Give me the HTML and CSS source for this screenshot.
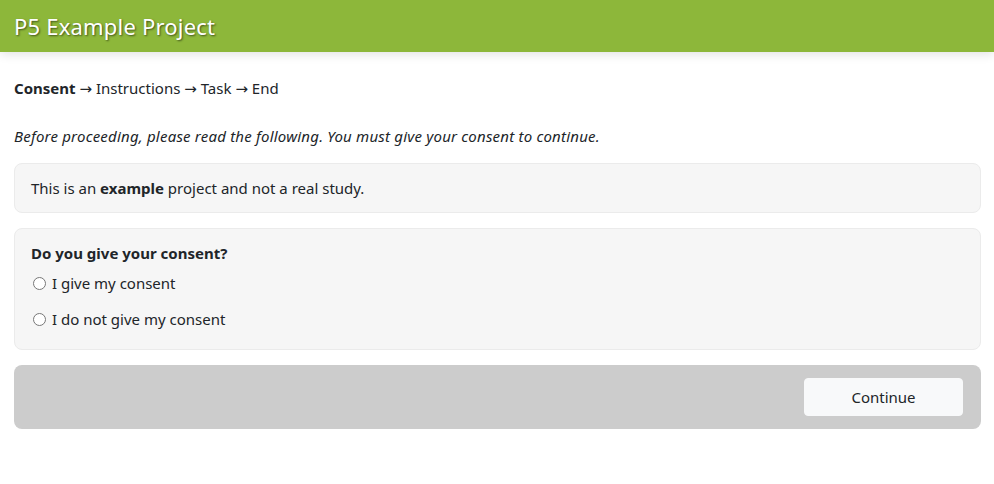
FILE: index.html
```html
<!DOCTYPE html>
<html lang="en">
<head>
<meta charset="utf-8">
<title>P5 Example Project</title>
<link rel="stylesheet" href="styles.css">
</head>
<body>
<header class="topbar">
  <h1 class="title">P5 Example Project</h1>
</header>
<main class="content">
  <nav class="steps"><strong>Consent</strong> <span class="arrow">→</span> Instructions <span class="arrow">→</span> Task <span class="arrow">→</span> End</nav>
  <p class="intro">Before proceeding, please read the following. You must give your consent to continue.</p>
  <section class="panel info">This is an <strong>example</strong> project and not a real study.</section>
  <section class="panel question">
    <div class="q-title">Do you give your consent?</div>
    <label class="option"><input type="radio" name="consent" class="radio"> I give my consent</label>
    <label class="option"><input type="radio" name="consent" class="radio"> I do not give my consent</label>
  </section>
  <div class="actions">
    <button class="btn" type="button">Continue</button>
  </div>
</main>
</body>
</html>
```
FILE: styles.css
```css
* { box-sizing: border-box; }
html, body { margin: 0; padding: 0; background: #fff; }
body {
  font-family: "Noto Sans", "Open Sans", sans-serif;
  font-size: 15px;
  line-height: 24px;
  color: #212529;
}
.topbar {
  height: 52px;
  background: #8db73a;
  box-shadow: 0 2px 10px rgba(0,0,0,0.12);
  display: flex;
  align-items: center;
  padding: 0 14px;
}
.title {
  margin: 0;
  font-weight: 400;
  font-size: 22px;
  letter-spacing: 0.2px;
  color: #fff;
  text-shadow: 1px 1px 2px rgba(0,0,0,0.55);
  line-height: 30px;
}
.content {
  padding: 24px 13px 0 14px;
}
.steps { margin: 0; height: 24px; }
.steps strong { font-weight: 700; }
.arrow {
  font-family: "DejaVu Sans", sans-serif;
  font-size: 15px;
  line-height: 1;
}
.intro {
  margin: 24px 0 15px;
  font-style: italic;
  letter-spacing: 0.21px;
}
.panel {
  background: #f6f6f6;
  border: 1px solid #ebebeb;
  border-radius: 8px;
  padding: 12px 16px;
}
.info { margin-bottom: 15px; }
.question { padding: 12px 16px 18px; }
.q-title { font-weight: 700; margin-bottom: 6px; }
.option {
  display: flex;
  align-items: center;
  gap: 6px;
}
.option + .option { margin-top: 12px; }
.radio {
  margin: 0 0 0 2px;
  width: 13px;
  height: 13px;
}
.actions {
  margin-top: 15px;
  background: #cccccc;
  border-radius: 8px;
  padding: 13px 18px 13px 13px;
  display: flex;
  justify-content: flex-end;
}
.btn {
  width: 159px;
  height: 38px;
  background: #f8f9fa;
  border: 1px solid #f8f9fa;
  border-radius: 4px;
  font-family: inherit;
  font-size: 15px;
  color: #212529;
  cursor: pointer;
}
```
